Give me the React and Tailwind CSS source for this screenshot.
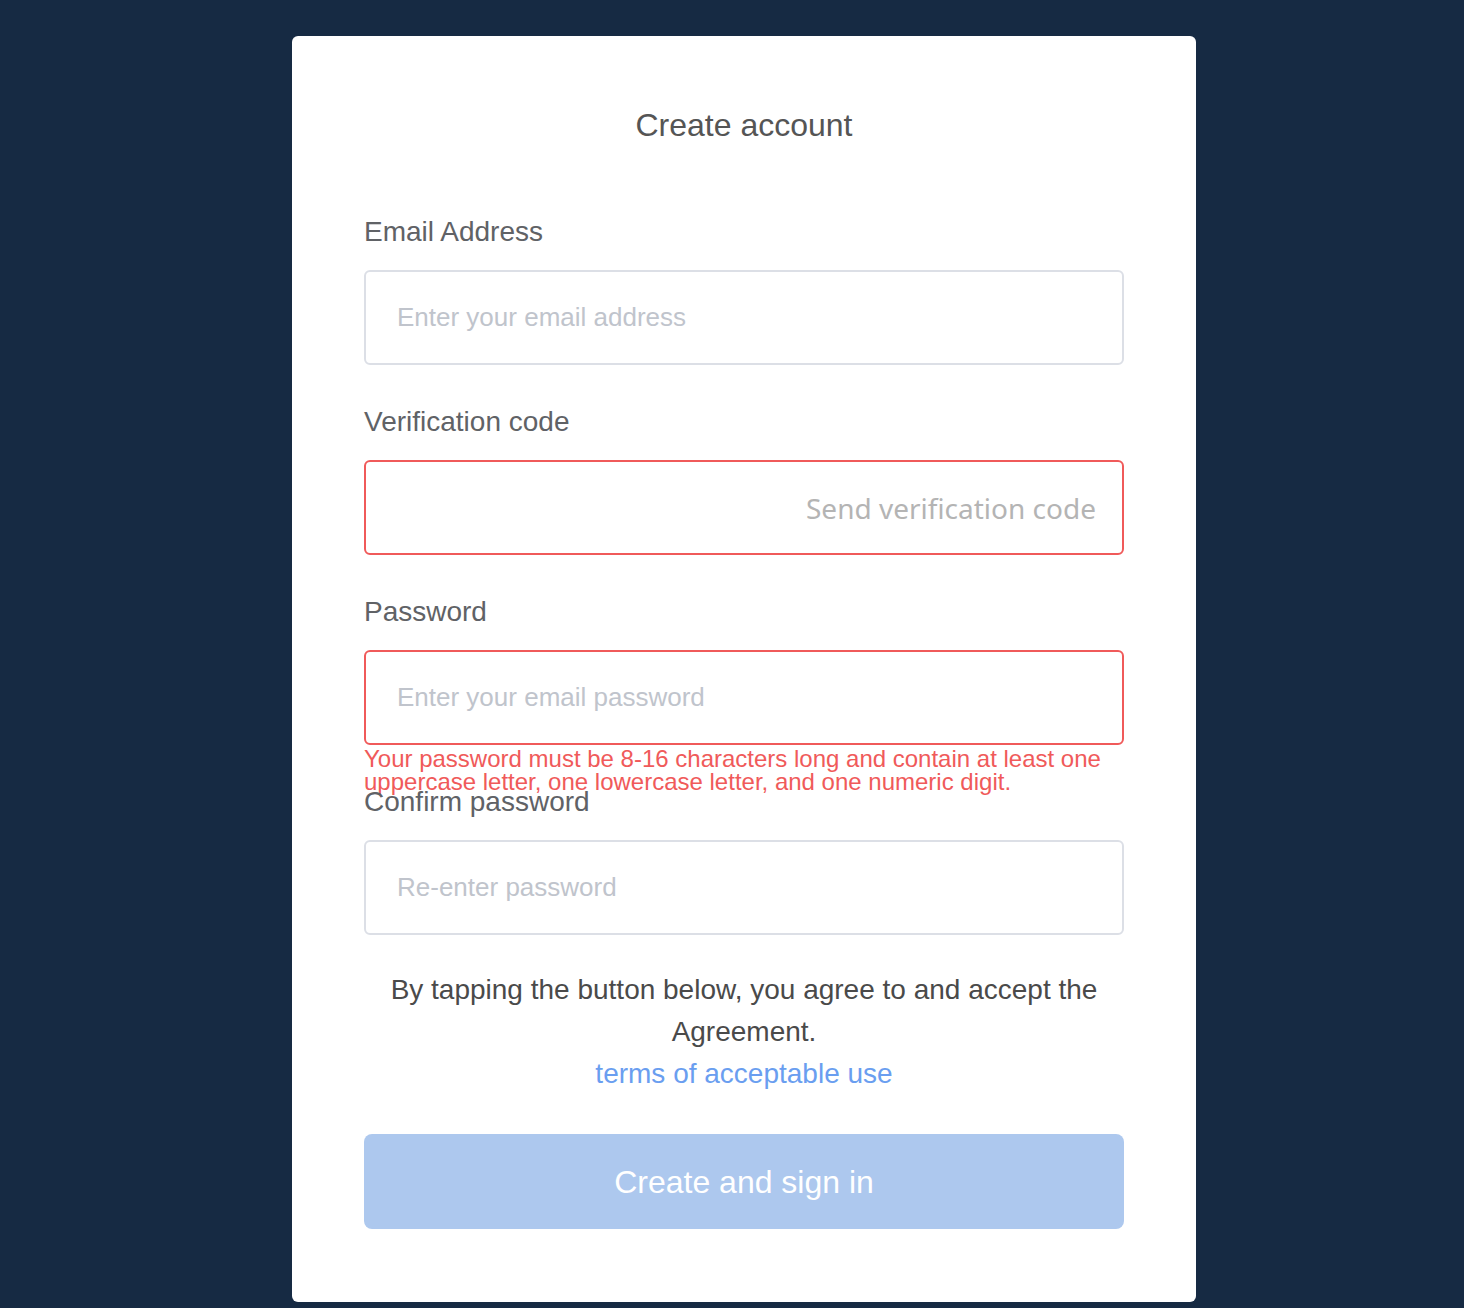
import { useState } from "react";

const FONT = "font-['Liberation_Sans',Arial,sans-serif]";

function Field({ label, placeholder, error, invalid, suffix, last }) {
  const [value, setValue] = useState("");
  return (
    <div className={`relative ${last ? "" : "mb-[37px]"}`}>
      <label className="block h-[40px] leading-[40px] mb-[18px] text-[28px] text-[#606266]">
        {label}
      </label>
      <div
        className={`flex items-center h-[95px] rounded-[6px] border-2 bg-white px-[31px] ${
          invalid ? "border-[#f05a5a]" : "border-[#dcdfe6]"
        }`}
      >
        <input
          value={value}
          onChange={(e) => setValue(e.target.value)}
          placeholder={placeholder}
          className="flex-1 min-w-0 h-full bg-transparent outline-none text-[26px] text-[#606266] placeholder:text-[#c0c4cc]"
        />
        {suffix && (
          <span className="font-['Noto_Sans',sans-serif] text-[28px] text-[#b4b4b4] -mr-[5px] whitespace-nowrap">
            {suffix}
          </span>
        )}
      </div>
      {error && (
        <div className="absolute left-0 right-0 top-full mt-[2px] text-[24px] leading-[23px] text-[#f05a5a]">
          {error}
        </div>
      )}
    </div>
  );
}

export default function App() {
  return (
    <div className={`min-h-[1308px] bg-[#162a43] pt-[36px] pb-[6px] ${FONT}`}>
      <div className="ml-[292px] w-[904px] bg-white rounded-[6px] px-[72px] pt-[69px] pb-[73px]">
        <h1 className="text-center text-[32px] leading-[40px] text-[#555]">Create account</h1>

        <form className="mt-[67px]" onSubmit={(e) => e.preventDefault()}>
          <Field label="Email Address" placeholder="Enter your email address" />
          <Field label="Verification code" invalid suffix="Send verification code" />
          <Field
            label="Password"
            placeholder="Enter your email password"
            invalid
            error="Your password must be 8-16 characters long and contain at least one uppercase letter, one lowercase letter, and one numeric digit."
          />
          <Field label="Confirm password" placeholder="Re-enter password" last />

          <div className="mt-[34px] text-center text-[28px] leading-[42px] text-[#4a4a4a]">
            <p>By tapping the button below, you agree to and accept the Agreement.</p>
            <a href="#" className="text-[#6a9ef0]">terms of acceptable use</a>
          </div>

          <button
            type="submit"
            disabled
            className="mt-[39px] w-full h-[95px] rounded-[8px] bg-[#adc8ee] text-white text-[32px]"
          >
            Create and sign in
          </button>
        </form>
      </div>
    </div>
  );
}
